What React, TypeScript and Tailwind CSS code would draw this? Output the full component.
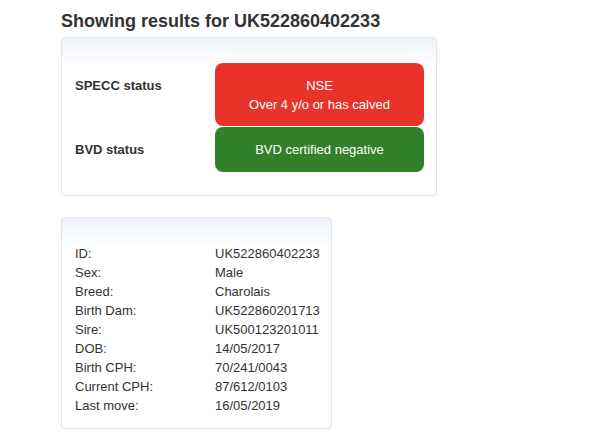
import React from "react";

const rows: [string, string][] = [
  ["ID:", "UK522860402233"],
  ["Sex:", "Male"],
  ["Breed:", "Charolais"],
  ["Birth Dam:", "UK522860201713"],
  ["Sire:", "UK500123201011"],
  ["DOB:", "14/05/2017"],
  ["Birth CPH:", "70/241/0043"],
  ["Current CPH:", "87/612/0103"],
  ["Last move:", "16/05/2019"],
];

export default function App() {
  return (
    <div
      className="w-[592px] h-[444px] bg-white text-[#333333] pl-[61px] pt-[11px]"
      style={{ fontFamily: '"Liberation Sans", Arial, Helvetica, sans-serif' }}
    >
      <h1 className="text-[18px] leading-[20px] font-bold text-[#333333]">
        Showing results for UK522860402233
      </h1>
      <div className="mt-[6px] w-[376px] border border-[#dfe5ec] rounded-[4px] bg-gradient-to-b from-[#edf1f8] to-white to-[28px] pl-[13px] pr-[12px] pt-[25px] pb-[23px] shadow-[0_1px_2px_rgba(0,0,0,0.04)]">
        <div className="flex items-start">
          <div className="w-[140px] pt-[13px] text-[13px] leading-[19px] font-bold">
            SPECC status
          </div>
          <div className="w-[209px] h-[63px] rounded-[8px] bg-[#e8322a] text-white text-[13px] leading-[19px] text-center pt-[13px]">
            <div>NSE</div>
            <div>Over 4 y/o or has calved</div>
          </div>
        </div>
        <div className="flex items-start mt-[1px]">
          <div className="w-[140px] pt-[13px] text-[13px] leading-[19px] font-bold">
            BVD status
          </div>
          <div className="w-[209px] h-[45px] rounded-[8px] bg-[#33802a] text-white text-[13px] leading-[19px] text-center pt-[13px]">
            BVD certified negative
          </div>
        </div>
      </div>
      <div className="mt-[21px] w-[271px] border border-[#dfe5ec] rounded-[4px] bg-gradient-to-b from-[#edf1f8] to-white to-[28px] pl-[13px] pt-[26px] pb-[13px] shadow-[0_1px_2px_rgba(0,0,0,0.04)]">
        {rows.map(([k, v]) => (
          <div key={k} className="flex text-[13px] leading-[19px]">
            <div className="w-[140px]">{k}</div>
            <div>{v}</div>
          </div>
        ))}
      </div>
    </div>
  );
}
